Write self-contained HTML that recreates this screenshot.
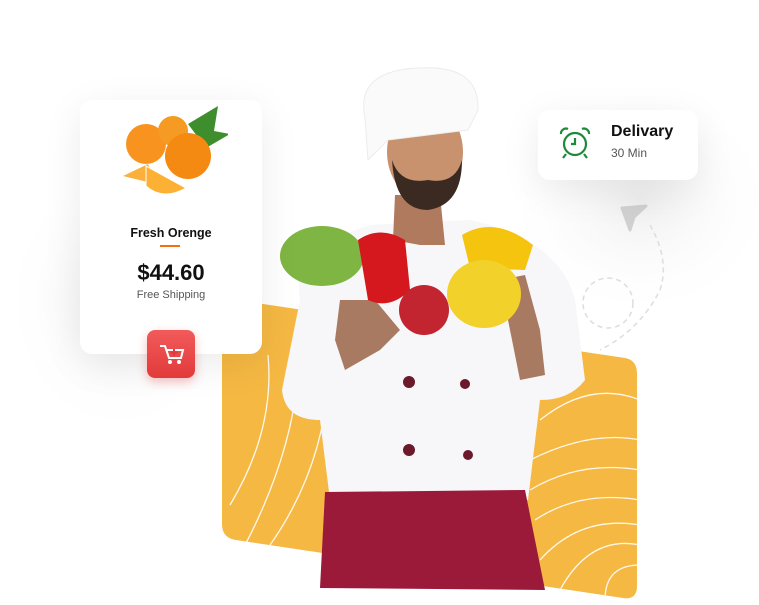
<!DOCTYPE html>
<html><head><meta charset="utf-8"><style>
html,body{margin:0;padding:0;background:#fff;width:759px;height:605px;overflow:hidden;font-family:"Liberation Sans",sans-serif}
.card{position:absolute;background:#fff;border-radius:12px;box-shadow:0 10px 40px rgba(0,0,0,0.08)}
</style></head><body>
<svg width="759" height="605" style="position:absolute;left:0;top:0">
<defs>
<radialGradient id="bg" cx="0.5" cy="0.5" r="0.5"><stop offset="0" stop-color="#eee"/><stop offset="1" stop-color="#fff" stop-opacity="0"/></radialGradient>
<clipPath id="yc"><path d="M236 300 L625 358 Q637 360 637 374 L637 586 Q637 600 623 598 L236 540 Q222 538 222 524 L222 314 Q222 298 236 300Z"/></clipPath>
</defs>
<ellipse cx="640" cy="200" rx="140" ry="120" fill="url(#bg)"/>
<ellipse cx="120" cy="300" rx="120" ry="140" fill="url(#bg)"/>
<path d="M236 300 L625 358 Q637 360 637 374 L637 586 Q637 600 623 598 L236 540 Q222 538 222 524 L222 314 Q222 298 236 300Z" fill="#f5b843"/>
<g clip-path="url(#yc)" fill="none" stroke="#fff" stroke-width="1.3" opacity="0.9">
<path d="M268 355 Q275 430 230 505"/><path d="M300 340 Q300 440 245 545"/><path d="M330 350 Q330 460 270 545"/>
<path d="M540 420 Q590 380 640 400"/><path d="M530 460 Q590 430 640 440"/><path d="M530 490 Q580 460 640 470"/>
<path d="M535 520 Q580 490 640 500"/><path d="M540 560 Q580 515 640 525"/><path d="M560 590 Q590 535 640 545"/><path d="M605 600 Q605 565 640 565"/>
</g>
<g fill="none" stroke="#ddd" stroke-width="1.5" stroke-dasharray="5 4">
<path d="M650 225 Q670 260 660 290 Q640 330 600 350"/>
<circle cx="608" cy="303" r="25"/>
</g>
<path d="M622 208 L646 206 L634 217 L630 230Z" fill="#d0d0d0" stroke="#d0d0d0" stroke-width="3" stroke-linejoin="round"/>
<!-- chef -->
<path d="M300 300 Q290 250 370 225 L470 220 Q560 240 575 300 L585 380 Q570 400 540 400 L528 500 L330 500 L320 420 Q285 420 282 390Z" fill="#f7f7f9"/>
<path d="M325 492 L525 490 L545 590 L320 588Z" fill="#9b1a3a"/>
<path d="M395 195 L440 195 L445 245 L420 245 L393 240Z" fill="#b07a5e"/>
<ellipse cx="425" cy="152" rx="38" ry="48" fill="#c8926f"/>
<path d="M392 160 Q395 210 428 210 Q462 205 462 160 Q455 185 428 180 Q400 185 392 160Z" fill="#3a2a22"/>
<path d="M365 118 Q355 70 420 68 Q480 65 478 110 L468 130 L388 140 L368 160Z" fill="#fafafa" stroke="#ececec"/>
<path d="M340 300 L375 300 L400 330 L380 350 L345 370 L335 340Z" fill="#a87a62"/>
<path d="M500 280 L525 275 L540 330 L545 375 L520 380 L510 330Z" fill="#a87a62"/>
<circle cx="409" cy="382" r="6" fill="#6a1a2a"/><circle cx="465" cy="384" r="5" fill="#6a1a2a"/>
<circle cx="409" cy="450" r="6" fill="#6a1a2a"/><circle cx="468" cy="455" r="5" fill="#6a1a2a"/>
<ellipse cx="322" cy="256" rx="42" ry="30" fill="#7fb542"/>
<path d="M358 240 Q380 225 405 240 L410 290 Q390 310 368 300Z" fill="#d4181e"/>
<circle cx="424" cy="310" r="25" fill="#c22430"/>
<path d="M462 235 Q495 215 533 245 L525 270 L470 268Z" fill="#f4c40f"/>
<ellipse cx="484" cy="294" rx="37" ry="34" fill="#f2d22a"/>
</svg>

<div class="card" style="left:80px;top:100px;width:182px;height:254px">
  <svg width="110" height="90" style="position:absolute;left:38px;top:6px">
    <path d="M70 18 L100 0 L96 25 L112 28 L88 42Z" fill="#3e8e2d"/>
    <circle cx="28" cy="38" r="20" fill="#f7931e"/><circle cx="55" cy="25" r="15" fill="#f59a23"/>
    <circle cx="70" cy="50" r="23" fill="#f58a12"/>
    <path d="M5 70 L30 58 L38 78Z" fill="#fbb03b"/><path d="M28 60 L68 82 Q45 95 28 80Z" fill="#fcb134" stroke="#fff"/>
  </svg>
  <div style="position:absolute;top:126px;width:100%;text-align:center;font-size:12.5px;font-weight:bold;color:#111">Fresh Orenge</div>
  <div style="position:absolute;top:145px;left:80px;width:20px;height:2px;background:#f36f10"></div>
  <div style="position:absolute;top:160px;width:100%;text-align:center;font-size:22px;font-weight:bold;color:#111">$44.60</div>
  <div style="position:absolute;top:189px;width:100%;text-align:center;font-size:11px;color:#555">Free Shipping</div>
</div>
<div style="position:absolute;left:147px;top:330px;width:48px;height:48px;border-radius:8px;background:linear-gradient(#f25a5a,#e23a3a);box-shadow:0 4px 10px rgba(230,50,50,0.3)">
  <svg width="48" height="48"><g fill="none" stroke="#fff" stroke-width="2"><path d="M13 16 L18 16 L22 28 L34 28 L36 20 L19 20"/></g><circle cx="23" cy="32" r="2" fill="#fff"/><circle cx="32" cy="32" r="2" fill="#fff"/><path d="M27 19v7M23.5 22.5h7" stroke="#e23a3a" stroke-width="2"/></svg>
</div>
<div class="card" style="left:538px;top:110px;width:160px;height:70px">
  <svg width="40" height="40" style="position:absolute;left:18px;top:14px"><g fill="none" stroke="#1b8a3a" stroke-width="2.2"><circle cx="19" cy="20" r="11"/><path d="M19 14v6h-4M10 30l-3 4M28 30l3 4M5 10a5 5 0 0 1 7-5M33 10a5 5 0 0 0-7-5"/></g></svg>
  <div style="position:absolute;left:73px;top:13px;font-size:16px;font-weight:bold;color:#111">Delivary</div>
  <div style="position:absolute;left:73px;top:36px;font-size:12px;color:#555">30 Min</div>
</div>
</body></html>
